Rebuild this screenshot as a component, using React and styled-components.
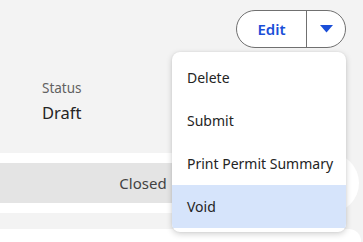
import React, { useState } from 'react';
import styled, { createGlobalStyle } from 'styled-components';

const GlobalStyle = createGlobalStyle`
  html, body { margin: 0; padding: 0; background: #f3f3f3; }
  body { font-family: "Noto Sans", "Open Sans", Arial, sans-serif; color: #242424; overflow: hidden; }
`;

const Page = styled.div`
  width: 363px; height: 242px; position: relative; overflow: hidden;
  display: flex; flex-direction: column;
`;

const Toolbar = styled.div`
  display: flex; justify-content: flex-end;
  padding: 10px 17px 0 0;
`;

const SplitWrap = styled.div` position: relative; `;

const SplitButton = styled.div`
  display: flex; height: 38px; box-sizing: border-box;
  border: 1px solid #707070; border-radius: 19px; background: #fff;
  overflow: hidden;
`;

const SplitPart = styled.button`
  border: none; background: transparent; padding: 0; margin: 0;
  display: flex; align-items: center; justify-content: center;
  width: ${p => p.$w}px; height: 100%;
  border-left: ${p => (p.$divider ? '1px solid #707070' : 'none')};
  color: #1b4fd8; font-family: inherit; font-size: 15px; font-weight: 600;
  cursor: pointer;
`;

const Menu = styled.ul`
  position: absolute; top: 42px; right: 0; z-index: 5;
  width: 174px; margin: 0; padding: 4px 0; list-style: none;
  background: #fff; border-radius: 8px;
  box-shadow: 0 2px 6px rgba(0,0,0,0.18), 0 0 2px rgba(0,0,0,0.08);
  overflow: hidden;
`;

const MenuItem = styled.li`
  height: 43px; display: flex; align-items: center;
  padding: 0 15px; font-size: 14px; color: #242424; white-space: nowrap;
  background: ${p => (p.$active ? '#d6e4fb' : 'transparent')};
`;

const Field = styled.div`
  display: flex; flex-direction: column;
  padding: 31px 0 0 42px;
`;

const Label = styled.div` font-size: 13.5px; line-height: 19px; color: #616161; `;
const Value = styled.div` font-size: 16.5px; line-height: 24px; color: #242424; margin-top: 3px; `;

const Track = styled.div`
  margin-top: 28px; width: 359px; height: 60px; box-sizing: border-box;
  padding: 10px 0; background: #fff; border-radius: 0 30px 30px 0;
`;

const Stage = styled.div`
  width: 286px; height: 40px; background: #e4e4e4;
  display: flex; align-items: center; justify-content: center;
  font-size: 15px; color: #424242;
`;

const Card = styled.div`
  margin-top: 16px; width: 361px; height: 40px;
  background: #fff; border-radius: 0 12px 0 0;
`;

const Caret = () => (
  <svg width="13" height="8" viewBox="0 0 13 8">
    <path d="M0 0 H13 L6.5 7.5 Z" fill="#1b4fd8" />
  </svg>
);

export default function App() {
  const [active] = useState('Void');
  const items = ['Delete', 'Submit', 'Print Permit Summary', 'Void'];
  return (
    <Page>
      <GlobalStyle />
      <Toolbar>
        <SplitWrap>
          <SplitButton>
            <SplitPart $w={69}>Edit</SplitPart>
            <SplitPart $w={39} $divider><Caret /></SplitPart>
          </SplitButton>
          <Menu>
            {items.map(i => (
              <MenuItem key={i} $active={i === active}>{i}</MenuItem>
            ))}
          </Menu>
        </SplitWrap>
      </Toolbar>
      <Field>
        <Label>Status</Label>
        <Value>Draft</Value>
      </Field>
      <Track>
        <Stage>Closed</Stage>
      </Track>
      <Card />
    </Page>
  );
}
